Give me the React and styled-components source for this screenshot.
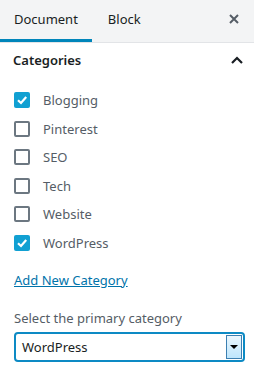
import React, { useState } from 'react';
import styled, { createGlobalStyle } from 'styled-components';

const GlobalStyle = createGlobalStyle`
  body {
    margin: 0;
    background: #fff;
    font-family: "Noto Sans", "Open Sans", sans-serif;
    color: #191e23;
  }
`;

const Panel = styled.div`
  width: 254px;
  height: 374px;
  overflow: hidden;
  background: #fff;
`;

const Header = styled.div`
  display: flex;
  align-items: stretch;
  height: 42px;
  background: #f3f4f5;
  border-bottom: 1px solid #e2e4e7;
`;

const Tab = styled.button`
  display: flex;
  align-items: center;
  height: 42px;
  padding: 0 ${p => p.$pad}px 1px;
  border: 0;
  border-bottom: 3px solid ${p => (p.$active ? '#0085ba' : 'transparent')};
  background: none;
  font: inherit;
  font-size: 13px;
  color: #191e23;
  cursor: pointer;
`;

const Close = styled.button`
  margin-left: auto;
  width: 40px;
  display: flex;
  align-items: center;
  justify-content: center;
  border: 0;
  background: none;
  padding: 0 0 5px 0;
  color: #555d66;
`;

const SectionTitle = styled.div`
  display: flex;
  align-items: center;
  justify-content: space-between;
  height: 34px;
  padding: 0 10px 0 13px;
  font-size: 13px;
  font-weight: 600;
  color: #191e23;
`;

const List = styled.div`
  display: flex;
  flex-direction: column;
  padding: 9px 0 0 14px;
`;

const Row = styled.label`
  display: flex;
  align-items: center;
  gap: 13px;
  height: 28.5px;
  font-size: 13px;
  color: #555d66;
`;

const Box = styled.span`
  width: 16px;
  height: 16px;
  box-sizing: border-box;
  border-radius: 2px;
  display: flex;
  align-items: center;
  justify-content: center;
  border: ${p => (p.$checked ? '0' : '2px solid #6c7781')};
  background: ${p => (p.$checked ? '#11a0d2' : '#fff')};
`;

const AddLink = styled.a`
  display: block;
  margin: 14px 0 0 14px;
  font-size: 13px;
  color: #0073aa;
  text-decoration: underline;
`;

const Label = styled.div`
  margin: 20px 0 0 14px;
  font-size: 13px;
  color: #555d66;
`;

const SelectBox = styled.div`
  display: flex;
  align-items: stretch;
  margin: 5px 9px 0 14px;
  height: 30px;
  box-sizing: border-box;
  border: 2px solid #0d8ac4;
  border-radius: 4px;
  background: #fff;
`;

const SelectValue = styled.div`
  flex: 1;
  display: flex;
  align-items: center;
  padding-left: 6px;
  font-size: 13px;
  color: #191e23;
`;

const Arrow = styled.div`
  width: 16px;
  margin: 1px;
  box-sizing: border-box;
  border: 1px solid #3c7fb1;
  background: linear-gradient(#eaf6fd, #bee6fd);
  display: flex;
  align-items: center;
  justify-content: center;
`;

const categories = [
  { name: 'Blogging', checked: true },
  { name: 'Pinterest', checked: false },
  { name: 'SEO', checked: false },
  { name: 'Tech', checked: false },
  { name: 'Website', checked: false },
  { name: 'WordPress', checked: true },
];

const App = () => {
  const [items, setItems] = useState(categories);

  const toggle = name => {
    setItems(items.map(item => (item.name === name ? { ...item, checked: !item.checked } : item)));
  };

  return (
    <Panel>
      <GlobalStyle />
      <Header>
        <Tab $active $pad={14}>Document</Tab>
        <Tab $pad={16}>Block</Tab>
        <Close>
          <svg width="12" height="12" viewBox="0 0 12 12">
            <path d="M2 2 L10 10 M10 2 L2 10" stroke="#555d66" strokeWidth="2" />
          </svg>
        </Close>
      </Header>
      <SectionTitle>
        Categories
        <svg width="14" height="10" viewBox="0 0 14 10">
          <path d="M2 8 L7 3 L12 8" stroke="#191e23" strokeWidth="2.2" fill="none" />
        </svg>
      </SectionTitle>
      <List>
        {items.map(item => (
          <Row key={item.name} onClick={() => toggle(item.name)}>
            <Box $checked={item.checked}>
              {item.checked && (
                <svg width="12" height="12" viewBox="0 0 12 12">
                  <path d="M2 6.2 L5 9 L10.2 3" stroke="#fff" strokeWidth="2.2" fill="none" />
                </svg>
              )}
            </Box>
            {item.name}
          </Row>
        ))}
      </List>
      <AddLink href="#">Add New Category</AddLink>
      <Label>Select the primary category</Label>
      <SelectBox>
        <SelectValue>WordPress</SelectValue>
        <Arrow>
          <svg width="8" height="5" viewBox="0 0 8 5">
            <path d="M0 0 L8 0 L4 4 Z" fill="#000" />
          </svg>
        </Arrow>
      </SelectBox>
    </Panel>
  );
};

export default App;
